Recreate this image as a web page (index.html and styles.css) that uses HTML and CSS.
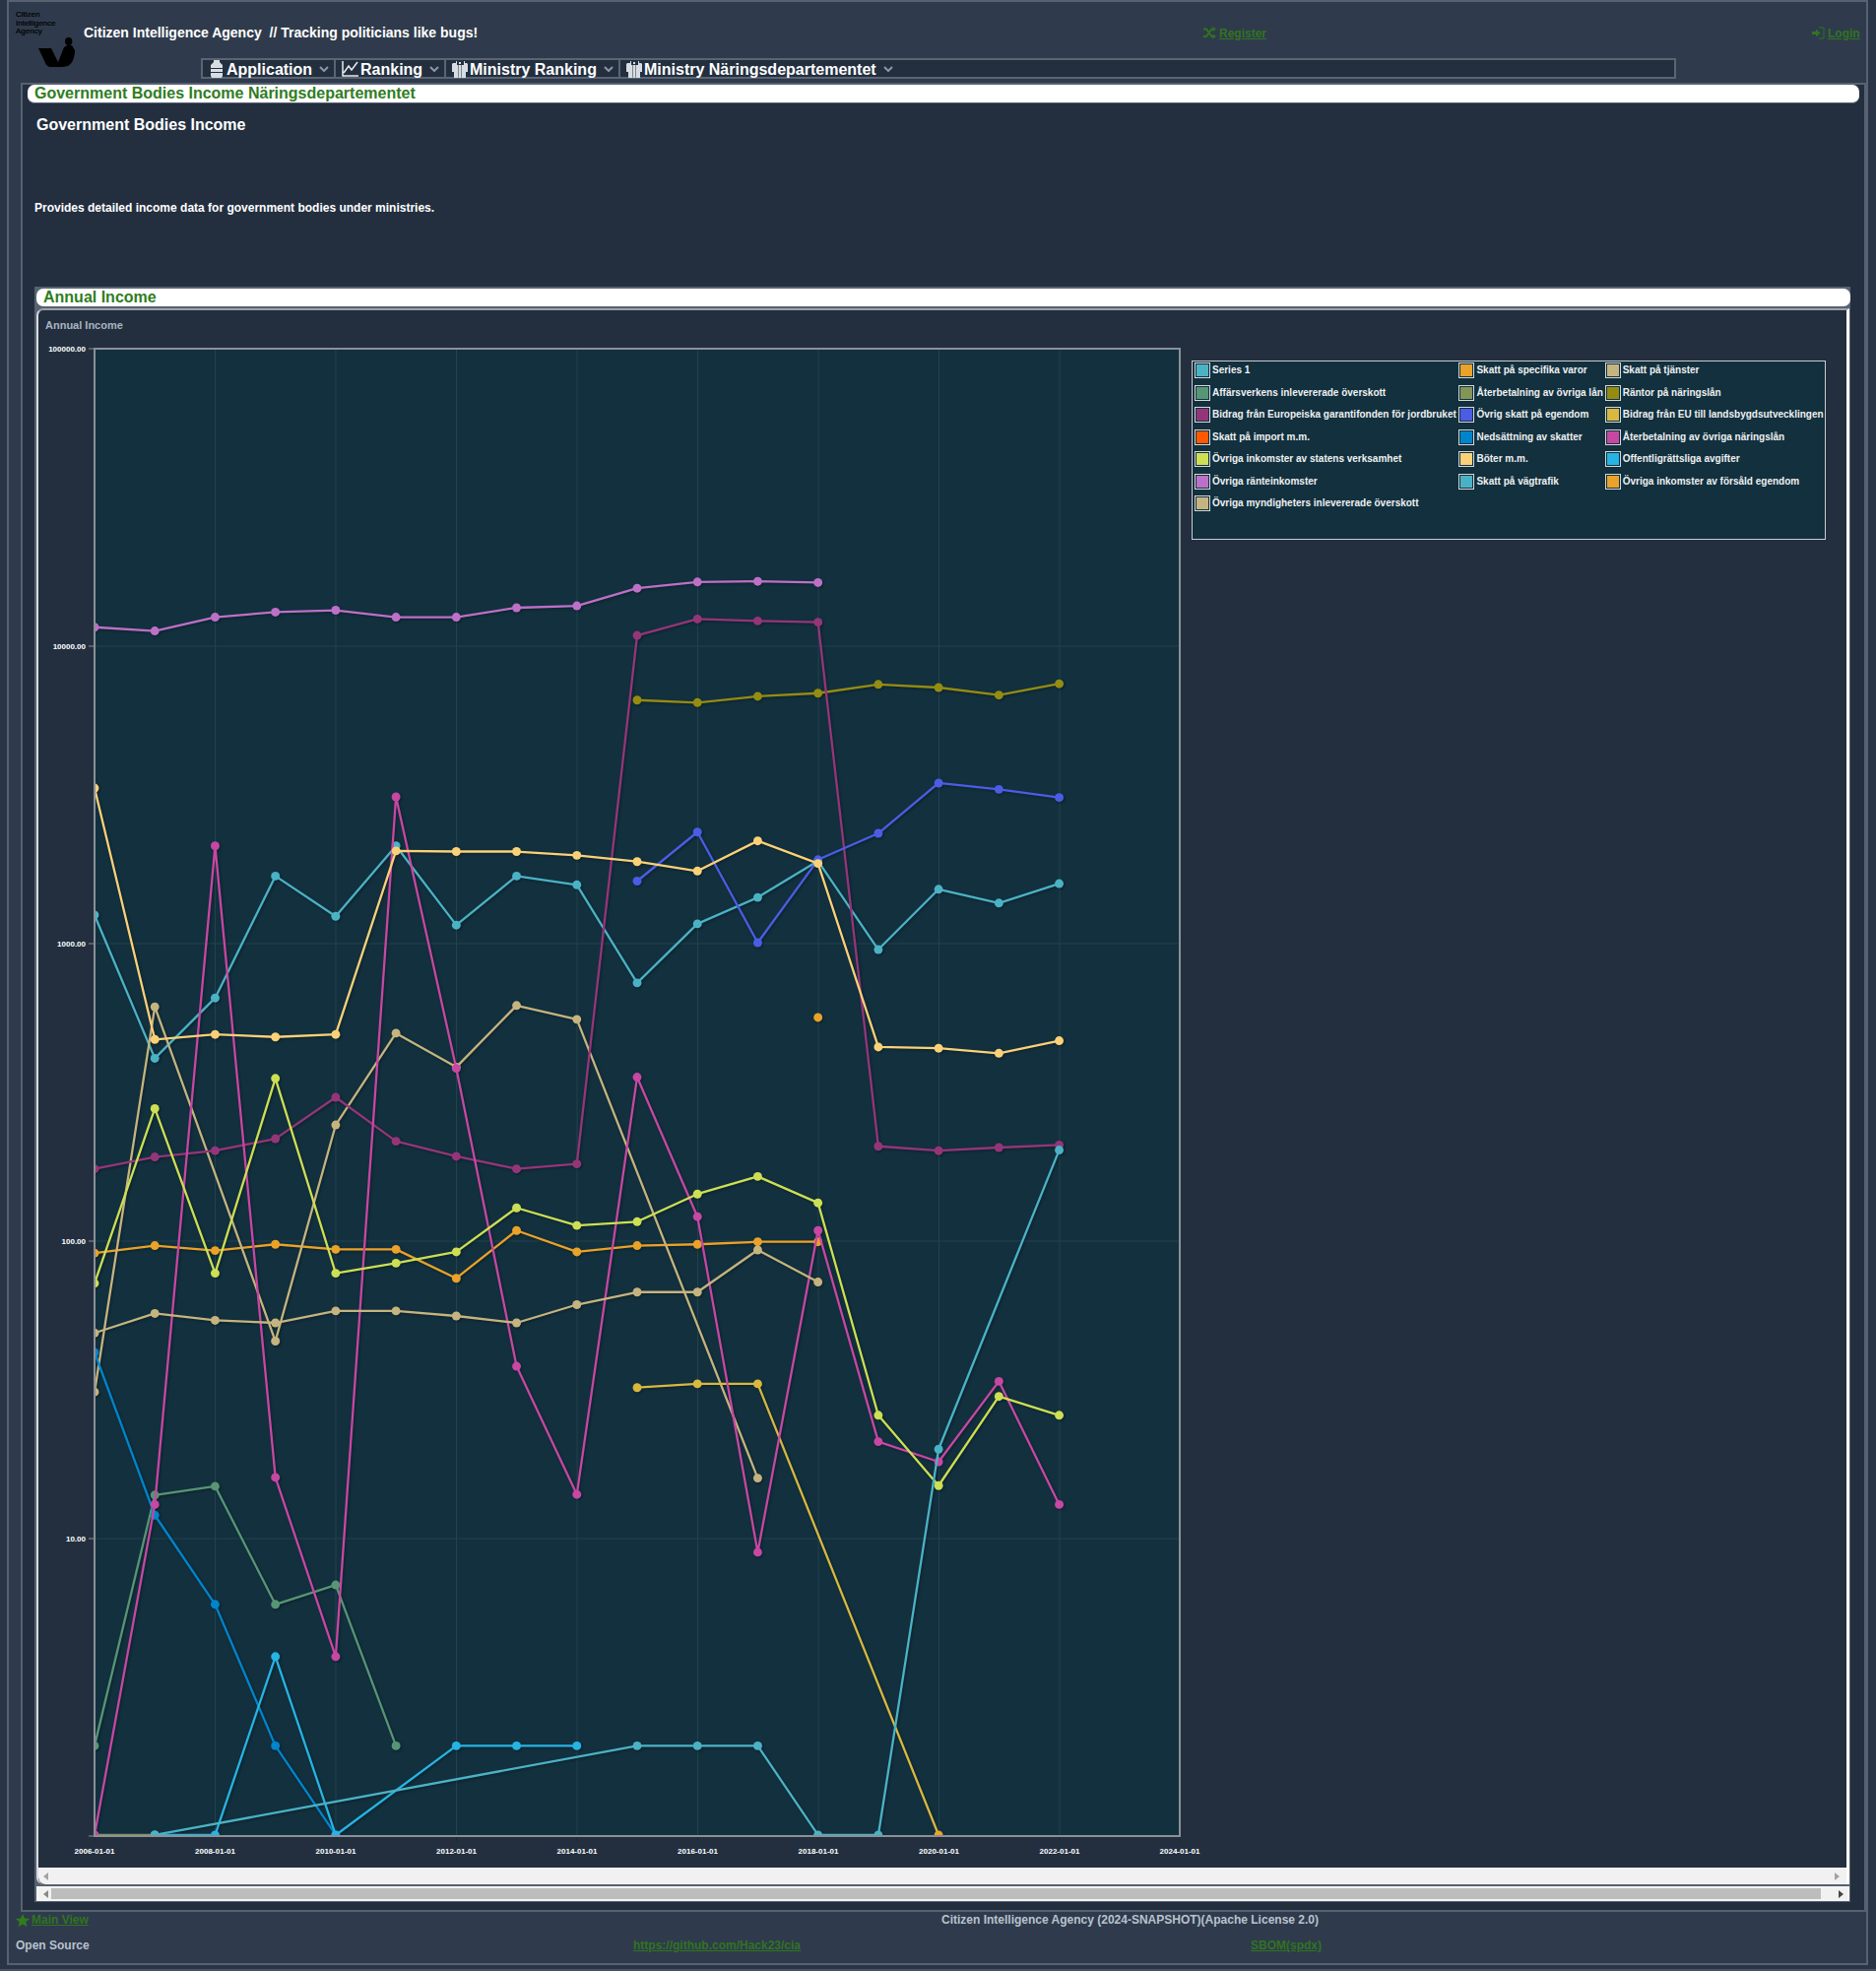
FILE: index.html
```html
<!DOCTYPE html>
<html lang="en">
<head>
<meta charset="utf-8">
<title>Citizen Intelligence Agency</title>
<link rel="stylesheet" href="styles.css">
</head>
<body>
<div class="frame">
  <header class="top">
    <div class="logo">
      <div class="logo-text">Citizen<br>Intelligence<br>Agency</div>
      <svg class="logo-mark" width="40" height="34" viewBox="0 0 40 34"><path d="M1 13H14L21 27 27 12 30 10H35L38 15C38 22 36 28 31 31L25 32H12L9 30ZM28 6A3.700 4 0 1 0 35.400 6 3.700 4 0 1 0 28 6Z"/></svg>
    </div>
    <div class="brand">Citizen Intelligence Agency&nbsp; // Tracking politicians like bugs!</div>
    <a class="auth auth-register" href="#"><svg class="auth-icon" width="13" height="13" viewBox="0 0 13 13"><path d="M0 2.500H3L8.500 10H10M0 10H3L8.500 2.500H10" fill="none" stroke-width="2"/><path class="solid" d="M9.500 0 13 2.500 9.500 5ZM9.500 7.500 13 10 9.500 12.500Z"/></svg><span>Register</span></a>
    <a class="auth auth-login" href="#"><svg class="auth-icon" width="13" height="13" viewBox="0 0 13 13"><path d="M7 1H12V12H7" fill="none" stroke-width="1"/><path class="solid" d="M0 5H4V2.500L8.500 6.500 4 10.500V8H0Z"/></svg><span>Login</span></a>
  </header>

  <nav class="nav">
    <div class="nav-item item-app">
      <svg class="nav-icon" width="12" height="18" viewBox="0 0 12 18"><path d="M3 0H9V2L12 5V8H0V5L3 2ZM0 9H12V12H0ZM0 13H12V16L11 18H1L0 16Z"/></svg>
      <span>Application</span>
      <svg class="chev" width="10" height="6" viewBox="0 0 10 6"><path d="M1 1 5 5 9 1"/></svg>
    </div>
    <div class="nav-item item-rank">
      <svg class="nav-icon" width="17" height="17" viewBox="0 0 17 17"><path class="hollow" d="M1 1V16H17M2 13 7 6 10 10 16 2"/></svg>
      <span>Ranking</span>
      <svg class="chev" width="10" height="6" viewBox="0 0 10 6"><path d="M1 1 5 5 9 1"/></svg>
    </div>
    <div class="nav-item item-min">
      <svg class="nav-icon" width="18" height="18" viewBox="0 0 18 18"><path d="M2 3H5V1H6V5H7V18H3V12H1V4ZM13 1H14V3H16L17 4V12H15V18H11V5H13ZM8 2H10V4H8ZM7.500 5H10.500V18H7.500Z"/></svg>
      <span>Ministry Ranking</span>
      <svg class="chev" width="10" height="6" viewBox="0 0 10 6"><path d="M1 1 5 5 9 1"/></svg>
    </div>
    <div class="nav-item item-dep">
      <svg class="nav-icon" width="18" height="18" viewBox="0 0 18 18"><path d="M2 3H5V1H6V5H7V18H3V12H1V4ZM13 1H14V3H16L17 4V12H15V18H11V5H13ZM8 2H10V4H8ZM7.500 5H10.500V18H7.500Z"/></svg>
      <span>Ministry Näringsdepartementet</span>
      <svg class="chev" width="10" height="6" viewBox="0 0 10 6"><path d="M1 1 5 5 9 1"/></svg>
    </div>
  </nav>

  <main class="content">
    <h1 class="page-title">Government Bodies Income Näringsdepartementet</h1>
    <h2 class="intro-title">Government Bodies Income</h2>
    <p class="intro-text">Provides detailed income data for government bodies under ministries.</p>

    <section class="section">
      <h2 class="section-title">Annual Income</h2>
      <div class="chart-panel">
        <div class="chart-title">Annual Income</div>
        <div class="chart-row">
          <svg class="chart" width="1171" height="1556" viewBox="0 0 1171 1556">
            <defs>
              <marker id="m1" markerUnits="userSpaceOnUse" markerWidth="8" markerHeight="8" refX="4" refY="4"><circle cx="4" cy="4" r="3.500" fill="#4bb2c5"/></marker>
              <marker id="m2" markerUnits="userSpaceOnUse" markerWidth="8" markerHeight="8" refX="4" refY="4"><circle cx="4" cy="4" r="3.500" fill="#eaa228"/></marker>
              <marker id="m3" markerUnits="userSpaceOnUse" markerWidth="8" markerHeight="8" refX="4" refY="4"><circle cx="4" cy="4" r="3.500" fill="#c5b47f"/></marker>
              <marker id="m4" markerUnits="userSpaceOnUse" markerWidth="8" markerHeight="8" refX="4" refY="4"><circle cx="4" cy="4" r="3.500" fill="#579575"/></marker>
              <marker id="m5" markerUnits="userSpaceOnUse" markerWidth="8" markerHeight="8" refX="4" refY="4"><circle cx="4" cy="4" r="3.500" fill="#839557"/></marker>
              <marker id="m6" markerUnits="userSpaceOnUse" markerWidth="8" markerHeight="8" refX="4" refY="4"><circle cx="4" cy="4" r="3.500" fill="#958c12"/></marker>
              <marker id="m7" markerUnits="userSpaceOnUse" markerWidth="8" markerHeight="8" refX="4" refY="4"><circle cx="4" cy="4" r="3.500" fill="#953579"/></marker>
              <marker id="m8" markerUnits="userSpaceOnUse" markerWidth="8" markerHeight="8" refX="4" refY="4"><circle cx="4" cy="4" r="3.500" fill="#4b5de4"/></marker>
              <marker id="m9" markerUnits="userSpaceOnUse" markerWidth="8" markerHeight="8" refX="4" refY="4"><circle cx="4" cy="4" r="3.500" fill="#d8b83f"/></marker>
              <marker id="m11" markerUnits="userSpaceOnUse" markerWidth="8" markerHeight="8" refX="4" refY="4"><circle cx="4" cy="4" r="3.500" fill="#0085cc"/></marker>
              <marker id="m12" markerUnits="userSpaceOnUse" markerWidth="8" markerHeight="8" refX="4" refY="4"><circle cx="4" cy="4" r="3.500" fill="#c747a3"/></marker>
              <marker id="m13" markerUnits="userSpaceOnUse" markerWidth="8" markerHeight="8" refX="4" refY="4"><circle cx="4" cy="4" r="3.500" fill="#cddf54"/></marker>
              <marker id="m14" markerUnits="userSpaceOnUse" markerWidth="8" markerHeight="8" refX="4" refY="4"><circle cx="4" cy="4" r="3.500" fill="#fbd178"/></marker>
              <marker id="m15" markerUnits="userSpaceOnUse" markerWidth="8" markerHeight="8" refX="4" refY="4"><circle cx="4" cy="4" r="3.500" fill="#26b4e3"/></marker>
              <marker id="m16" markerUnits="userSpaceOnUse" markerWidth="8" markerHeight="8" refX="4" refY="4"><circle cx="4" cy="4" r="3.500" fill="#bd70c7"/></marker>
            </defs>

            <rect class="plot-bg" x="57" y="14" width="1102" height="1510"/>
            <path class="grid" d="M57 316H1159M57 618H1159M57 920H1159M57 1222H1159M179.500 14V1524M302 14V1524M424.500 14V1524M547 14V1524M669.500 14V1524M792 14V1524M914.500 14V1524M1037 14V1524"/>
            <path class="ticks" d="M51 14H56M51 316H56M51 618H56M51 920H56M51 1222H56M51 1524H56"/>
            <path class="ticks-x" d="M57 1525V1530M179.500 1525V1530M302 1525V1530M424.500 1525V1530M547 1525V1530M669.500 1525V1530M792 1525V1530M914.500 1525V1530M1037 1525V1530M1159 1525V1530"/>

            <svg class="series" x="57" y="14" width="1102" height="1510" viewBox="75 277.400 864 1183.400" preserveAspectRatio="none">
              <g class="lines">
                <polyline stroke="#4bb2c5" marker-start="url(#m1)" marker-mid="url(#m1)" marker-end="url(#m1)" points="75,728 123,842 171,794 219,697 267,729 315,673 363,736 411,697 459,704 507,782 555,735 603,714 651,685 699,755.500 747,707.500 795,718.500 843,703"/>
                <polyline stroke="#eaa228" marker-start="url(#m2)" marker-mid="url(#m2)" marker-end="url(#m2)" points="75,997 123,991 171,995 219,990 267,994 315,994 363,1017 411,979 459,996 507,991 555,990 603,988 651,988"/>
                <polyline stroke="#c5b47f" marker-start="url(#m3)" marker-mid="url(#m3)" marker-end="url(#m3)" points="75,1107.500 123,801 219,1067 267,895 315,822 363,849 411,800 459,811 603,1176"/>
                <polyline stroke="#579575" marker-start="url(#m4)" marker-mid="url(#m4)" marker-end="url(#m4)" points="75,1389 123,1189.500 171,1182.500 219,1276.500 267,1261 315,1389"/>
                <polyline stroke="#839557" marker-start="url(#m5)" marker-end="url(#m5)" points="75,1460 123,1460"/>
                <polyline stroke="#958c12" marker-start="url(#m6)" marker-mid="url(#m6)" marker-end="url(#m6)" points="507,557 555,559 603,554 651,551.500 699,544.500 747,547 795,553 843,544"/>
                <polyline stroke="#953579" marker-start="url(#m7)" marker-mid="url(#m7)" marker-end="url(#m7)" points="75,930 123,920.500 171,915.500 219,906 267,873 315,908 363,920 411,930 459,926 507,505.500 555,492.500 603,494 651,495 699,912 747,915.500 795,913 843,911"/>
                <polyline stroke="#4b5de4" marker-start="url(#m8)" marker-mid="url(#m8)" marker-end="url(#m8)" points="507,701 555,662 603,750 651,684 699,663 747,623 795,628 843,634.500"/>
                <polyline stroke="#d8b83f" marker-start="url(#m9)" marker-mid="url(#m9)" marker-end="url(#m2)" points="507,1104 555,1101 603,1101 747,1460"/>
                <polyline stroke="#0085cc" marker-start="url(#m11)" marker-mid="url(#m11)" marker-end="url(#m11)" points="75,1076 123,1205.500 171,1276.500 219,1389 267,1460"/>
                <polyline stroke="#c747a3" marker-start="url(#m12)" marker-mid="url(#m12)" marker-end="url(#m12)" points="75,1460 123,1197 171,673 219,1175.500 267,1318 315,634 363,850 411,1087 459,1189 507,857 555,968 603,1235 651,979 699,1147 747,1163 795,1099 843,1197"/>
                <polyline stroke="#cddf54" marker-start="url(#m13)" marker-mid="url(#m13)" marker-end="url(#m13)" points="75,1021 123,882 171,1013 219,858 267,1013 315,1005 363,996 411,961 459,975 507,972 555,950 603,936 651,957 699,1126 747,1182 795,1111 843,1126"/>
                <polyline stroke="#fbd178" marker-start="url(#m14)" marker-mid="url(#m14)" marker-end="url(#m14)" points="75,627 123,827 171,823 219,825 267,823 315,677 363,677.500 411,677.500 459,680.500 507,685.500 555,693 603,669 651,687 699,833 747,834 795,838 843,828"/>
                <polyline stroke="#26b4e3" marker-start="url(#m15)" marker-mid="url(#m15)" marker-end="url(#m15)" points="123,1460 171,1460 219,1318 267,1460 363,1389 411,1389 459,1389"/>
                <polyline stroke="#bd70c7" marker-start="url(#m16)" marker-mid="url(#m16)" marker-end="url(#m16)" points="75,499 123,502 171,491 219,487 267,485.500 315,491 363,491 411,483.500 459,482 507,468 555,463 603,462.500 651,463.500"/>
                <polyline stroke="#4bb2c5" marker-start="url(#m1)" marker-mid="url(#m1)" marker-end="url(#m1)" points="123,1460 507,1389 555,1389 603,1389 651,1460 699,1460 747,1153 843,915"/>
                <circle class="dot" cx="651" cy="809.500" r="3.500"/>
                <polyline stroke="#c5b47f" marker-start="url(#m3)" marker-mid="url(#m3)" marker-end="url(#m3)" points="75,1060.500 123,1045 171,1050.500 219,1052.500 267,1043 315,1043 363,1047 411,1052.500 459,1038 507,1028 555,1028 603,994.500 651,1020"/>
              </g>
            </svg>
            <rect class="plot-border" x="57" y="14" width="1102" height="1510"/>

            <g class="axis-y">
              <text x="48" y="17">100000.00</text>
              <text x="48" y="319">10000.00</text>
              <text x="48" y="621">1000.00</text>
              <text x="48" y="923">100.00</text>
              <text x="48" y="1225">10.00</text>
            </g>
            <g class="axis-x">
              <text x="57" y="1542">2006-01-01</text>
              <text x="179.500" y="1542">2008-01-01</text>
              <text x="302" y="1542">2010-01-01</text>
              <text x="424.500" y="1542">2012-01-01</text>
              <text x="547" y="1542">2014-01-01</text>
              <text x="669.500" y="1542">2016-01-01</text>
              <text x="792" y="1542">2018-01-01</text>
              <text x="914.500" y="1542">2020-01-01</text>
              <text x="1037" y="1542">2022-01-01</text>
              <text x="1159" y="1542">2024-01-01</text>
            </g>
          </svg>

          <table class="legend">
            <tr><td><i class="sw c1"></i></td><td>Series 1</td><td><i class="sw c2"></i></td><td>Skatt på specifika varor</td><td><i class="sw c3"></i></td><td>Skatt på tjänster</td></tr>
            <tr><td><i class="sw c4"></i></td><td>Affärsverkens inlevererade överskott</td><td><i class="sw c5"></i></td><td>Återbetalning av övriga lån</td><td><i class="sw c6"></i></td><td>Räntor på näringslån</td></tr>
            <tr><td><i class="sw c7"></i></td><td>Bidrag från Europeiska garantifonden för jordbruket</td><td><i class="sw c8"></i></td><td>Övrig skatt på egendom</td><td><i class="sw c9"></i></td><td>Bidrag från EU till landsbygdsutvecklingen</td></tr>
            <tr><td><i class="sw c10"></i></td><td>Skatt på import m.m.</td><td><i class="sw c11"></i></td><td>Nedsättning av skatter</td><td><i class="sw c12"></i></td><td>Återbetalning av övriga näringslån</td></tr>
            <tr><td><i class="sw c13"></i></td><td>Övriga inkomster av statens verksamhet</td><td><i class="sw c14"></i></td><td>Böter m.m.</td><td><i class="sw c15"></i></td><td>Offentligrättsliga avgifter</td></tr>
            <tr><td><i class="sw c16"></i></td><td>Övriga ränteinkomster</td><td><i class="sw c1"></i></td><td>Skatt på vägtrafik</td><td><i class="sw c2"></i></td><td>Övriga inkomster av försåld egendom</td></tr>
            <tr><td><i class="sw c3"></i></td><td>Övriga myndigheters inlevererade överskott</td><td></td><td></td><td></td><td></td></tr>
          </table>
        </div>
        <div class="scroll scroll-inner"><i class="arrow-left dim"></i><i class="arrow-right dim"></i></div>
      </div>
      <div class="scroll scroll-outer"><i class="arrow-left"></i><b class="thumb"></b><i class="arrow-right dark"></i></div>
    </section>
  </main>

  <footer class="footer">
    <div class="foot-row foot-two">
      <div class="foot-cell"><svg class="star" width="14" height="13" viewBox="0 0 14 13"><path d="M7 0 9 4.500 14 5 10.300 8.200 11.400 13 7 10.400 2.600 13 3.700 8.200 0 5 5 4.500Z"/></svg><a href="#">Main View</a></div>
      <div class="foot-cell foot-muted">Citizen Intelligence Agency (2024-SNAPSHOT)(Apache License 2.0)</div>
    </div>
    <div class="foot-row foot-three">
      <div class="foot-cell foot-muted foot-source">Open Source</div>
      <div class="foot-cell"><a href="#">https://github.com/Hack23/cia</a></div>
      <div class="foot-cell"><a href="#">SBOM(spdx)</a></div>
    </div>
  </footer>
</div>
<div class="bottom-strip"></div>
</body>
</html>
```

FILE: styles.css
```css
* { box-sizing: border-box; }

html, body { margin: 0; padding: 0; }

body {
  width: 1905px;
  height: 2001px;
  overflow: hidden;
  background: #293546;
  font-family: "Liberation Sans", Arial, sans-serif;
  font-weight: bold;
  color: #fff;
}

a { color: #2f741f; text-decoration: underline; }

.frame {
  width: 1890px;
  height: 1995px;
  margin-left: 7px;
  background: #2f3b4c;
  border: 2px solid #566171;
}

.bottom-strip {
  height: 2px;
  margin-top: 4px;
  background: #465163;
}

/* header */
.top {
  display: grid;
  grid-template-columns: 69px 1137px 618px auto;
  height: 57px;
  padding-left: 7px;
}

.logo { position: relative; }

.logo-text {
  padding-top: 9px;
  font-size: 8px;
  line-height: 8.500px;
  font-weight: normal;
  color: #000;
  -webkit-text-stroke: 0.2px #000;
}

.logo-mark {
  position: absolute;
  left: 22px;
  top: 34px;
  fill: #000;
}

.brand {
  padding-top: 23px;
  font-size: 14px;
  line-height: 16px;
}

.auth {
  display: flex;
  align-items: flex-start;
  gap: 3px;
  padding-top: 24px;
  font-size: 12px;
  line-height: 16px;
  text-decoration: none;
}

.auth span { text-decoration: underline; }

.auth-icon { stroke: #2f741f; margin-top: 1px; }
.auth-icon .solid { fill: #2f741f; stroke: none; }

/* navigation */
.nav {
  display: flex;
  width: 1498px;
  height: 21px;
  margin-left: 195px;
  background: #232f3f;
  border: 2px solid #5a6473;
}

.nav-item {
  display: flex;
  align-items: center;
  height: 17px;
  font-size: 16px;
  line-height: 17px;
}

.nav-item span { white-space: nowrap; margin-top: 1px; }

.nav-icon { fill: #d8dde3; flex: none; }
.nav-icon .hollow { fill: none; stroke: #e8ebef; stroke-width: 1.500; }

.chev { flex: none; fill: none; stroke: #8d96a3; stroke-width: 2; }

.item-app { width: 135px; padding-left: 8px; border-right: 2px solid #5a6473; }
.item-app span { margin-left: 4px; }
.item-app .chev { margin-left: 7px; }

.item-rank { width: 112px; padding-left: 6px; border-right: 2px solid #5a6473; }
.item-rank span { margin-left: 2px; }
.item-rank .chev { margin-left: 7px; }

.item-min { width: 177px; padding-left: 5px; border-right: 2px solid #5a6473; }
.item-min span { margin-left: 1px; }
.item-min .chev { margin-left: 7px; }

.item-dep { padding-left: 5px; }
.item-dep span { margin-left: 1px; }
.item-dep .chev { margin-left: 7px; }

/* content */
.content {
  width: 1874px;
  height: 1857px;
  margin: 4px 0 0 12px;
  background: #232f3f;
  border: 2px solid #566171;
  padding: 0 5px;
}

.page-title {
  height: 19px;
  margin: 0;
  padding-left: 7px;
  background: #fff;
  border-bottom: 1px solid #566171;
  border-radius: 7px;
  color: #2f7d1e;
  font-size: 16px;
  line-height: 18px;
}

.intro-title {
  height: 34px;
  margin: 0;
  padding: 13px 0 0 9px;
  font-size: 16px;
  line-height: 18px;
}

.intro-text {
  height: 152px;
  margin: 0;
  padding: 65px 0 0 7px;
  font-size: 12px;
  line-height: 14px;
}

.section {
  width: 1844px;
  height: 1640px;
  margin: 0 0 0 7px;
  border: 2px solid #566171;
  border-right: 0;
  border-bottom: 1px solid #566171;
  background: #566171;
}

.section-title {
  height: 18px;
  margin: 0;
  padding-left: 7px;
  background: #fff;
  border-radius: 7px;
  color: #2f7d1e;
  font-size: 16px;
  line-height: 17px;
}

.chart-panel {
  width: 1841px;
  height: 1600px;
  margin-top: 2px;
  background: #232f3f;
  border-left: 2px solid #d7dadd;
  border-top: 2px solid #9aa1aa;
  border-right: 3px solid #fff;
  border-radius: 7px 0 0 7px;
  overflow: hidden;
}

.chart-title {
  height: 25px;
  padding: 8px 0 0 7px;
  font-size: 11px;
  line-height: 14px;
  color: #aab3c0;
}

.chart-row {
  display: flex;
  align-items: flex-start;
}

.chart { flex: none; display: block; overflow: visible; }

.plot-bg { fill: #12303e; }
.plot-border { fill: none; stroke: #8b9097; stroke-width: 2; }

.grid { fill: none; stroke: #24414d; stroke-width: 1; }
.ticks { fill: none; stroke: #8b9097; stroke-width: 1; }
.ticks-x { fill: none; stroke: #1c2a38; stroke-width: 1; }

.lines polyline {
  fill: none;
  stroke-width: 1.800;
  stroke-linejoin: round;
}

.lines { filter: drop-shadow(1px 1px 1px rgba(0, 0, 0, 0.3)); }

.dot { fill: #eaa228; }

.axis-y text, .axis-x text {
  fill: #fff;
  font-size: 8px;
  font-weight: bold;
}

.axis-y text { text-anchor: end; }
.axis-x text { text-anchor: middle; }

/* legend */
.legend {
  flex: none;
  width: 644px;
  height: 182px;
  margin: 26px 0 0 0;
  background: #12303e;
  border: 1px solid #c9ccce;
  border-collapse: separate;
  border-spacing: 0;
  font-size: 10px;
  line-height: 16px;
  color: #eef0f1;
}

.legend tr { height: 22.500px; }
.legend tr:last-child { height: 45px; }
.legend td { padding: 1px 0 0; white-space: nowrap; vertical-align: top; }
.legend td:nth-child(odd) { width: 19px; padding-left: 1px; }
.legend td:first-child { width: 20px; padding-left: 2px; }

.sw {
  display: block;
  width: 16px;
  height: 16px;
  border: 1px solid #d6d8da;
  box-shadow: inset 0 0 0 1px #12303e;
}

.c1 { background: #4bb2c5; }
.c2 { background: #eaa228; }
.c3 { background: #c5b47f; }
.c4 { background: #579575; }
.c5 { background: #839557; }
.c6 { background: #958c12; }
.c7 { background: #953579; }
.c8 { background: #4b5de4; }
.c9 { background: #d8b83f; }
.c10 { background: #ff5800; }
.c11 { background: #0085cc; }
.c12 { background: #c747a3; }
.c13 { background: #cddf54; }
.c14 { background: #fbd178; }
.c15 { background: #26b4e3; }
.c16 { background: #bd70c7; }

/* scroll bars */
.scroll {
  display: flex;
  align-items: center;
}

.scroll-inner {
  height: 17px;
  padding: 0 7px 0 5px;
  background: #f1f1f1;
  border-bottom-left-radius: 7px;
}

.scroll-outer {
  width: 1841px;
  height: 15px;
  margin-top: 2px;
  background: #f1f1f1;
  border: 2px solid #f4f4f4;
  padding: 0 4px 0 5px;
}

.thumb {
  width: 1797px;
  height: 11px;
  margin-left: 3px;
  background: #bdbdbd;
}

.arrow-left, .arrow-right {
  display: block;
  width: 0;
  height: 0;
  border-top: 4px solid transparent;
  border-bottom: 4px solid transparent;
}

.arrow-left { border-right: 5px solid #8a8a8a; }
.arrow-right { margin-left: auto; border-left: 5px solid #8a8a8a; }
.arrow-left.dim { border-right-color: #a3a3a3; }
.arrow-right.dim { border-left-color: #a3a3a3; }
.arrow-right.dark { border-left-color: #444; }

/* footer */
.footer {
  padding: 1px 0 0 7px;
  font-size: 12px;
  line-height: 14px;
}

.foot-row { display: grid; }
.foot-two { grid-template-columns: 940px 1fr; height: 26px; }
.foot-three { grid-template-columns: 627px 627px 1fr; }

.foot-two .foot-cell { display: flex; align-items: center; height: 14px; }

.star { fill: #2f7d1e; margin-right: 2px; flex: none; }

.foot-muted { color: #b9c2cf; }
```
